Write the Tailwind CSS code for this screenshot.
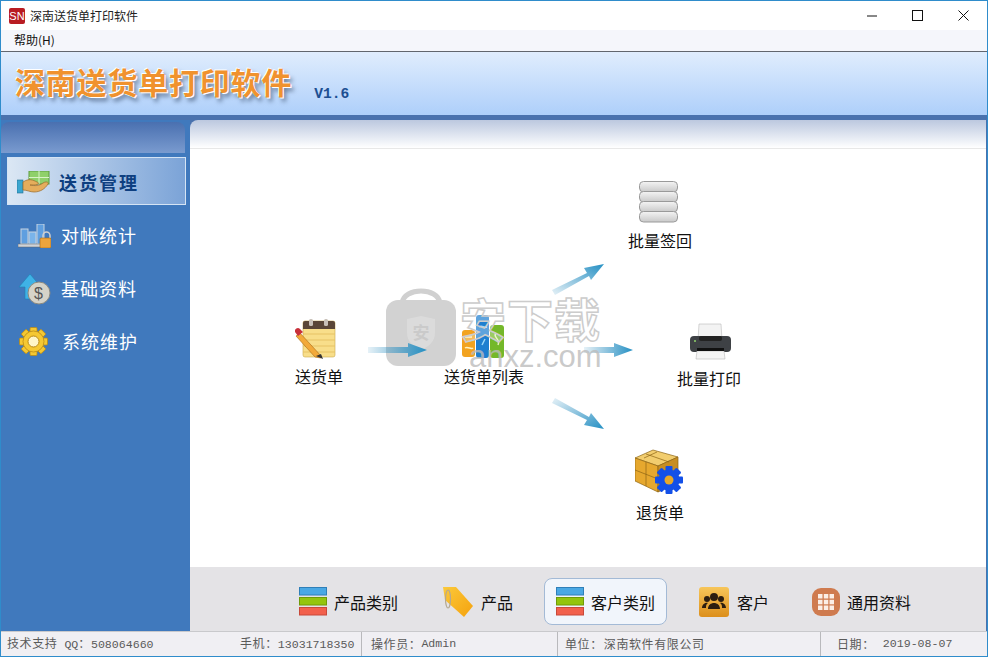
<!DOCTYPE html>
<html lang="zh-CN">
<head>
<meta charset="UTF-8">
<title>深南送货单打印软件</title>
<script src="https://cdn.jsdelivr.net/npm/@tailwindcss/browser@4"></script>
</head>
<body class="bg-white">
<svg width="0" height="0" class="absolute">
  <defs>
    <linearGradient id="arrow-h" x1="0" x2="1" y1="0" y2="0"><stop offset="0" stop-color="#2f8fc0" stop-opacity=".12"/><stop offset="1" stop-color="#2490c4"/></linearGradient>
    <linearGradient id="arrow-up" x1="0" x2="1" y1="1" y2="0"><stop offset="0" stop-color="#2f8fc0" stop-opacity=".12"/><stop offset="1" stop-color="#2490c4"/></linearGradient>
    <linearGradient id="arrow-down" x1="0" x2="1" y1="0" y2="1"><stop offset="0" stop-color="#2f8fc0" stop-opacity=".12"/><stop offset="1" stop-color="#2490c4"/></linearGradient>
    <linearGradient id="disk" x1="0" x2="0" y1="0" y2="1"><stop offset="0" stop-color="#f4f4f4"/><stop offset="1" stop-color="#c9c9c9"/></linearGradient>
    <linearGradient id="gold" x1="0" x2="0" y1="0" y2="1"><stop offset="0" stop-color="#f7c65a"/><stop offset="1" stop-color="#dc8f1c"/></linearGradient>
    <linearGradient id="tag" x1="0" x2="1" y1="0" y2="1"><stop offset="0" stop-color="#fbc93a"/><stop offset="1" stop-color="#f5a20e"/></linearGradient>
    <g id="stack-icon">
      <rect x=".5" y=".5" width="27" height="7.500" fill="#4aa8e4" stroke="#2f7fb8"/>
      <rect x=".5" y="10.500" width="27" height="7.500" fill="#94c40c" stroke="#6f9a08"/>
      <rect x=".5" y="20.500" width="27" height="7.500" fill="#f2604c" stroke="#c8493a"/>
    </g>
    <g id="gear-teeth">
      <rect x="-3.500" y="-14" width="7" height="28" rx="1"/>
      <rect x="-3.500" y="-14" width="7" height="28" rx="1" transform="rotate(45)"/>
      <rect x="-3.500" y="-14" width="7" height="28" rx="1" transform="rotate(90)"/>
      <rect x="-3.500" y="-14" width="7" height="28" rx="1" transform="rotate(135)"/>
      <circle r="10.500"/>
    </g>
  </defs>
</svg>

<div class="w-[988px] h-[657px] overflow-hidden flex flex-col border border-[#2f8ccb] font-['Noto_Sans_CJK_SC',sans-serif] text-black">
  <!-- title bar -->
  <div class="h-[29px] flex items-center bg-white shrink-0">
    <div class="ml-[8px] w-[16px] h-[16px] bg-[#b81c22] rounded-[2px] text-white text-[11px] leading-[16px] text-center font-['Liberation_Sans',sans-serif]">SN</div>
    <div class="ml-[5px] text-[12px] text-[#222]">深南送货单打印软件</div>
    <div class="ml-auto flex items-center gap-[35px] pr-[18px]">
      <svg width="10" height="10" viewBox="0 0 10 10"><path d="M0 5h10" stroke="#111" stroke-width="1"/></svg>
      <svg width="11" height="11" viewBox="0 0 11 11"><rect x=".5" y=".5" width="10" height="10" fill="none" stroke="#111"/></svg>
      <svg width="11" height="11" viewBox="0 0 11 11"><path d="M.5.5l10 10M10.500.5l-10 10" stroke="#111" fill="none"/></svg>
    </div>
  </div>
  <!-- menu -->
  <div class="h-[21px] shrink-0 bg-[#f5f6fb] border-b border-[#62666e] box-content pl-[13px] text-[12px] leading-[20px] text-[#111]">帮助(H)</div>
  <!-- banner -->
  <div class="h-[63px] shrink-0 bg-gradient-to-b from-[#e0edfd] to-[#aecffa] relative flex items-start pl-[14px]">
    <div class="mt-[9px] text-[30px] leading-[40px] tracking-[0.8px] font-bold text-[#f0922e] [text-shadow:1px_1px_0_#fff,-1px_-1px_0_#fff,3px_4px_4px_rgba(40,60,90,.6)]">深南送货单打印软件</div>
    <div class="ml-[22px] mt-[34px] text-[14.6px] leading-[16px] font-bold text-[#1d4f92] font-['Liberation_Mono',monospace]">V1.6</div>
  </div>
  <!-- main -->
  <div class="flex-1 flex bg-[#4a72ae] pt-[5px] min-h-0">
    <!-- sidebar -->
    <div class="w-[189px] shrink-0 bg-[#4079bd] flex flex-col">
      <div class="h-[31px] w-[184px] rounded-t-[8px] bg-gradient-to-b from-[#4a70b0] to-[#7a9bcf] mt-[2px] shrink-0"></div>
      <div class="mt-[4px] ml-[6px] w-[179px] h-[48px] border border-[#d5e4f4] bg-gradient-to-r from-[#dbe7f4] to-[#7ba3d7] flex items-center pl-[9px] pt-[2px] text-[18px] font-bold tracking-[2px] text-[#0e3f80]">
        <svg class="mr-[9px] shrink-0" width="33" height="23" viewBox="0 0 33 23">
          <rect x="0" y="9" width="6" height="13" fill="#3aa6d0" stroke="#23708f" stroke-width=".6"/>
          <rect x="12" y="0" width="20" height="13" fill="#8fd06a" stroke="#5c9c3c"/>
          <path d="M22 0v13M12 6.500h20" stroke="#d9f2c7"/>
          <path d="M6 11c6-4 10-2 14 0 3 1 1 3-3 3h-4c5 1 9 1 13-2 3-2 6-1 5 1-3 5-8 8-14 8-4 0-7-2-11-2z" fill="#e5ad5c" stroke="#9a6a28" stroke-width=".7"/>
        </svg>
        送货管理
      </div>
      <div class="mt-[4px] h-[53px] flex items-center pl-[17px] text-[18px] tracking-[1px] text-white">
        <svg class="mr-[10px] shrink-0" width="33" height="24" viewBox="0 0 33 24">
          <rect x="3" y="5" width="7" height="15" fill="#5f9fe0" stroke="#c8d4e0"/>
          <rect x="11" y="8" width="7" height="12" fill="#7ab4ea" stroke="#c8d4e0"/>
          <rect x="19" y="0" width="7" height="20" fill="#5f9fe0" stroke="#c8d4e0"/>
          <rect x="0" y="20" width="28" height="3" fill="#cfd3d8" stroke="#666" stroke-width=".5"/>
          <path d="M25 14v-2.500a3.500 3.500 0 0 1 7 0V14" fill="none" stroke="#d0d0d0" stroke-width="1.500"/>
          <rect x="22" y="14" width="11" height="10" rx="1" fill="#eda43c" stroke="#a86a14" stroke-width=".6"/>
        </svg>
        对帐统计
      </div>
      <div class="h-[53px] flex items-center pl-[17px] text-[18px] tracking-[1px] text-white">
        <svg class="mr-[10px] shrink-0" width="33" height="32" viewBox="0 0 33 32">
          <path d="M1 14L12 1l11 13h-5v12H7V14z" fill="#3fb2e6" stroke="#1f7fb4" stroke-width=".6"/>
          <circle cx="21" cy="20" r="11" fill="#d6d3c8" stroke="#8c8a80"/>
          <text x="21" y="26" text-anchor="middle" font-size="16" font-family="Liberation Sans" fill="#555">$</text>
        </svg>
        基础资料
      </div>
      <div class="h-[53px] flex items-center pl-[18px] text-[18px] tracking-[1px] text-white">
        <svg class="mr-[14px] shrink-0" width="29" height="29" viewBox="-14.500 -14.500 29 29">
          <use href="#gear-teeth" fill="#f5c832" stroke="#b98a16" stroke-width=".8"/>
          <circle r="5.500" fill="#fff6c8" stroke="#b98a16"/>
        </svg>
        系统维护
      </div>
    </div>

    <!-- content -->
    <div class="w-[796px] flex flex-col min-h-0">
      <div class="h-[29px] shrink-0 rounded-tl-[8px] bg-gradient-to-b from-[#bcc8df] to-white border-b border-[#e8e8e8]"></div>
      <!-- diagram: items sit on a free canvas -->
      <div class="relative h-[418px] bg-white shrink-0 text-[16px] leading-[20px]">
        <!-- watermark -->
        <svg class="absolute left-[196px] top-[138px] opacity-70" width="70" height="80" viewBox="0 0 70 80">
          <path d="M16 16C18 0 52 0 54 16" fill="none" stroke="#bdbdbd" stroke-width="5"/>
          <rect x="0" y="13" width="70" height="66" rx="12" fill="#bfbfbf"/>
          <path d="M21 32l14-3 14 3v14c0 9-7 14-14 17-7-3-14-8-14-17z" fill="#cdcdcd"/>
          <text x="35" y="52" text-anchor="middle" font-size="17" font-weight="700" font-family="Noto Sans CJK SC" fill="#b5b5b5">安</text>
        </svg>
        <!-- 送货单 -->
        <svg class="absolute left-[105px] top-[170px]" width="42" height="41" viewBox="0 0 42 41">
          <rect x="8" y="2" width="32" height="36" rx="2" fill="#f8de8a" stroke="#c9a84c" stroke-width=".6"/>
          <path d="M8 15h32M8 21h32M8 27h32M8 33h32" stroke="#e6c264"/>
          <path d="M8 10V4a2 2 0 0 1 2-2h28a2 2 0 0 1 2 2v6z" fill="#5a4638"/>
          <rect x="14" y="0" width="4" height="7" rx="1.500" fill="#c8c0b8"/>
          <rect x="29" y="0" width="4" height="7" rx="1.500" fill="#c8c0b8"/>
          <path d="M5 14l22 24-1 1-6-1L1 17z" fill="#f2a93a" stroke="#a86a14" stroke-width=".6"/>
          <path d="M0 13a3 3 0 0 1 5-3l3 3-5 4z" fill="#c8303a"/>
          <path d="M21 37l7 3-2-5z" fill="#333"/>
        </svg>
        <div class="absolute left-[105px] top-[217px] text-[#111]">送货单</div>
        <!-- 送货单列表 -->
        <svg class="absolute left-[272px] top-[166px]" width="43" height="44" viewBox="0 0 43 44">
          <rect x="0" y="15" width="13" height="27" rx="3" fill="#f2a320"/>
          <path d="M3 22h7M3 33c3-2 6 2 8 0" stroke="#fff2c0" stroke-width="1.500" fill="none"/>
          <rect x="14" y="0" width="13" height="43" rx="3" fill="#1f7fd0"/>
          <path d="M17 12c3-2 5 1 8 0M20 30l3-6" stroke="#9bd8f8" stroke-width="1.500" fill="none"/>
          <rect x="28" y="10" width="14" height="33" rx="3" fill="#74b82a"/>
          <path d="M34 18c-4 4 5 6 2 12" stroke="#e2f6b8" stroke-width="1.500" fill="none"/>
        </svg>
        <div class="absolute left-[254px] top-[217px] text-[#111]">送货单列表</div>
        <!-- 批量签回 -->
        <svg class="absolute left-[449px] top-[32px]" width="39" height="42" viewBox="0 0 39 42">
          <g fill="url(#disk)" stroke="#9a9a9a">
            <rect x=".5" y=".5" width="38" height="10.500" rx="4"/>
            <rect x=".5" y="10.500" width="38" height="10.500" rx="4"/>
            <rect x=".5" y="20.500" width="38" height="10.500" rx="4"/>
            <rect x=".5" y="30.500" width="38" height="10.500" rx="4"/>
          </g>
        </svg>
        <div class="absolute left-[438px] top-[81px] text-[#111]">批量签回</div>
        <!-- 批量打印 -->
        <svg class="absolute left-[500px] top-[174px]" width="41" height="37" viewBox="0 0 41 37">
          <path d="M9 1h22l1 16H8z" fill="#f3f3f3" stroke="#bbb" stroke-width=".6"/>
          <rect x="0" y="13" width="41" height="16" rx="4" fill="#3e4145"/>
          <rect x="9" y="13" width="23" height="5" rx="2" fill="#222"/>
          <path d="M7 28h27l1 8H6z" fill="#f5f5f5" stroke="#bbb" stroke-width=".6"/>
          <rect x="7" y="25" width="27" height="3" fill="#111"/>
          <circle cx="5" cy="18" r="1" fill="#8fd06a"/>
        </svg>
        <div class="absolute left-[487px] top-[219px] text-[#111]">批量打印</div>
        <!-- 退货单 -->
        <svg class="absolute left-[445px] top-[300px]" width="49" height="46" viewBox="0 0 49 46">
          <path d="M0 9l18-8 25 7-20 9z" fill="#f2cd6e" stroke="#8c6414" stroke-width=".7"/>
          <path d="M0 9l23 8v26L0 32z" fill="#e6a82e" stroke="#8c6414" stroke-width=".7"/>
          <path d="M23 17l20-9v26l-20 9z" fill="#c88e22" stroke="#8c6414" stroke-width=".7"/>
          <path d="M11 5l23 8M22 3L9 9M11 13v24M0 21l23 9" stroke="#8c6414" stroke-width=".7" fill="none"/>
          <g transform="translate(34 31)" fill="#1350e8"><use href="#gear-teeth"/></g>
          <circle cx="34" cy="31" r="4.500" fill="#e8a828"/>
        </svg>
        <div class="absolute left-[446px] top-[353px] text-[#111]">退货单</div>

        <!-- arrows -->
        <svg class="absolute left-[178px] top-[193px]" width="60" height="16" viewBox="0 0 60 16"><path d="M0 5h40V1l19 7-19 7v-4H0z" fill="url(#arrow-h)"/></svg>
        <svg class="absolute left-[394px] top-[193px]" width="50" height="16" viewBox="0 0 50 16"><path d="M0 5h30V1l19 7-19 7v-4H0z" fill="url(#arrow-h)"/></svg>
        <svg class="absolute left-[362px] top-[115px]" width="52" height="32" viewBox="0 0 52 32"><path d="M0 26L35 9l-3-5 20-4-13 16-2-4L3 31z" fill="url(#arrow-up)"/></svg>
        <svg class="absolute left-[362px] top-[249px]" width="52" height="32" viewBox="0 0 52 32"><path d="M0 5L35 22l-3 5 20 4-13-16-2 4L3 0z" fill="url(#arrow-down)"/></svg>

        <!-- watermark text lies over the icons -->
        <div class="absolute left-[270px] top-[142px] text-[46px] leading-[52px] font-bold text-white/30 [-webkit-text-stroke:1.5px_#cccccc] tracking-[1px]">安下载</div>
        <div class="absolute left-[279px] top-[188px] text-[31px] leading-[40px] text-[#bcbcbc]/80 font-['Liberation_Sans',sans-serif]">anxz.com</div>
      </div>
      <!-- bottom toolbar -->
      <div class="flex-1 bg-[#e4e3e6] flex items-center pl-[109px] pt-[5px] text-[16px] text-[#111]">
        <div class="flex items-center w-[143px]">
          <svg class="mr-[7px]" width="28" height="29" viewBox="0 0 28 29"><use href="#stack-icon"/></svg>产品类别
        </div>
        <div class="flex items-center w-[102px]">
          <svg class="mr-[7px]" width="32" height="33" viewBox="0 0 32 33">
            <path d="M1 2h13l17 19-9 11L3 15z" fill="url(#tag)"/>
            <ellipse cx="6" cy="14" rx="2.500" ry="9" fill="none" stroke="#b5a890" stroke-width="1.200"/>
          </svg>产品
        </div>
        <div class="flex items-center w-[123px] h-[47px] border border-[#a3bad6] bg-[#f1f5fb] rounded-[8px] pl-[11px]">
          <svg class="mr-[7px]" width="28" height="29" viewBox="0 0 28 29"><use href="#stack-icon"/></svg>客户类别
        </div>
        <div class="flex items-center w-[113px] ml-[32px]">
          <svg class="mr-[8px]" width="30" height="30" viewBox="0 0 30 30">
            <rect width="30" height="30" rx="3" fill="url(#gold)"/>
            <g fill="#2c1e10">
              <circle cx="15" cy="10" r="4"/><circle cx="8" cy="12" r="3"/><circle cx="22" cy="12" r="3"/>
              <path d="M9 22c0-8 12-8 12 0zM3 21c0-5 5-6 6-5-2 1-2 3-2 5zM27 21c0-5-5-6-6-5 2 1 2 3 2 5z"/>
            </g>
          </svg>客户
        </div>
        <div class="flex items-center">
          <svg class="mr-[7px]" width="28" height="28" viewBox="0 0 28 28">
            <rect width="28" height="28" rx="9" fill="#cf7b4f"/>
            <g fill="#fbeee6">
              <rect x="6" y="6" width="4.500" height="4.500"/><rect x="11.800" y="6" width="4.500" height="4.500"/><rect x="17.500" y="6" width="4.500" height="4.500"/>
              <rect x="6" y="11.800" width="4.500" height="4.500"/><rect x="11.800" y="11.800" width="4.500" height="4.500"/><rect x="17.500" y="11.800" width="4.500" height="4.500"/>
              <rect x="6" y="17.500" width="4.500" height="4.500"/><rect x="11.800" y="17.500" width="4.500" height="4.500"/><rect x="17.500" y="17.500" width="4.500" height="4.500"/>
            </g>
          </svg>通用资料
        </div>
      </div>
    </div>
  </div>
  <!-- status bar -->
  <div class="h-[25px] shrink-0 bg-[#f0eff3] border-t border-[#c9c9cc] flex items-center text-[12px] text-[#5a5a5a] tracking-[0.6px]">
    <div class="w-[361px] h-full flex items-center border-r border-[#b9b9bc] pl-[6px]">
      <span class="w-[233px]">技术支持<span class="ml-[7px] font-['Liberation_Mono',monospace] text-[11.6px] tracking-[0px]">QQ</span>：<span class="font-['Liberation_Mono',monospace] text-[11.6px] tracking-[0px]">508064660</span></span>
      <span>手机：<span class="font-['Liberation_Mono',monospace] text-[11.6px] tracking-[0px]">13031718350</span></span>
    </div>
    <div class="w-[196px] h-full flex items-center border-r border-[#b9b9bc] pl-[9px]">操作员：<span class="font-['Liberation_Mono',monospace] text-[11.6px] tracking-[0px]">Admin</span></div>
    <div class="w-[263px] h-full flex items-center border-r border-[#b9b9bc] pl-[7px]">单位：<span class="ml-[1px]">深南软件有限公司</span></div>
    <div class="flex-1 h-full flex items-center pl-[16px]">日期：<span class="ml-[8px] font-['Liberation_Mono',monospace] text-[11.6px] tracking-[0px]">2019-08-07</span></div>
  </div>
</div>
</body>
</html>
